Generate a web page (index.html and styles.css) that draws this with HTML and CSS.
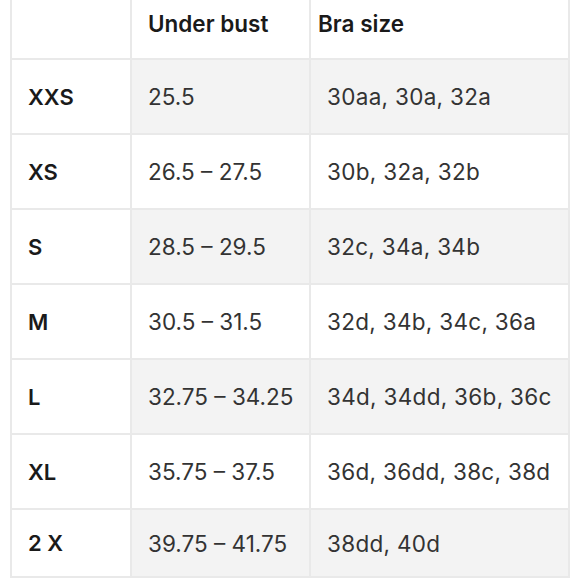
FILE: index.html
```html
<!DOCTYPE html>
<html>
<head>
<meta charset="utf-8">
<link rel="stylesheet" href="styles.css">
</head>
<body>
<div class="chart">
  <div class="cell head"></div>
  <div class="cell head col2">Under bust</div>
  <div class="cell head col3">Bra size</div>

  <div class="cell label">XXS</div>
  <div class="cell val shade">25.5</div>
  <div class="cell val col3 shade">30aa, 30a, 32a</div>

  <div class="cell label">XS</div>
  <div class="cell val">26.5 – 27.5</div>
  <div class="cell val col3">30b, 32a, 32b</div>

  <div class="cell label">S</div>
  <div class="cell val shade">28.5 – 29.5</div>
  <div class="cell val col3 shade">32c, 34a, 34b</div>

  <div class="cell label">M</div>
  <div class="cell val">30.5 – 31.5</div>
  <div class="cell val col3">32d, 34b, 34c, 36a</div>

  <div class="cell label">L</div>
  <div class="cell val shade">32.75 – 34.25</div>
  <div class="cell val col3 shade">34d, 34dd, 36b, 36c</div>

  <div class="cell label">XL</div>
  <div class="cell val">35.75 – 37.5</div>
  <div class="cell val col3">36d, 36dd, 38c, 38d</div>

  <div class="cell label">2 X</div>
  <div class="cell val shade">39.75 – 41.75</div>
  <div class="cell val col3 shade">38dd, 40d</div>
</div>
</body>
</html>
```

FILE: styles.css
```css
html, body {
  margin: 0;
  padding: 0;
  background: #ffffff;
}
body {
  font-family: Inter, "Noto Sans", sans-serif;
  color: #2e2e2e;
}
.chart {
  margin-left: 10px;
  width: 560px;
  display: grid;
  grid-template-columns: 120px 179px 259px;
  grid-template-rows: 60px repeat(6, 75px) 68px;
  border-left: 2px solid #e9e9e9;
  box-sizing: border-box;
}
.cell {
  border-right: 2px solid #e9e9e9;
  border-bottom: 2px solid #e9e9e9;
  display: flex;
  align-items: center;
  padding-left: 16px;
  font-size: 22.5px;
  box-sizing: border-box;
}
.head {
  align-items: flex-start;
  padding-top: 10px;
  font-weight: 600;
  color: #1a1a1a;
}
.head.col3 {
  padding-left: 7px;
}
.label {
  font-size: 22px;
  font-weight: 600;
  color: #1a1a1a;
}
.val {
  color: #333333;
}
.val.col3 {
  padding-left: 16px;
  letter-spacing: 0.3px;
}
.shade {
  background: #f3f3f3;
}
```
